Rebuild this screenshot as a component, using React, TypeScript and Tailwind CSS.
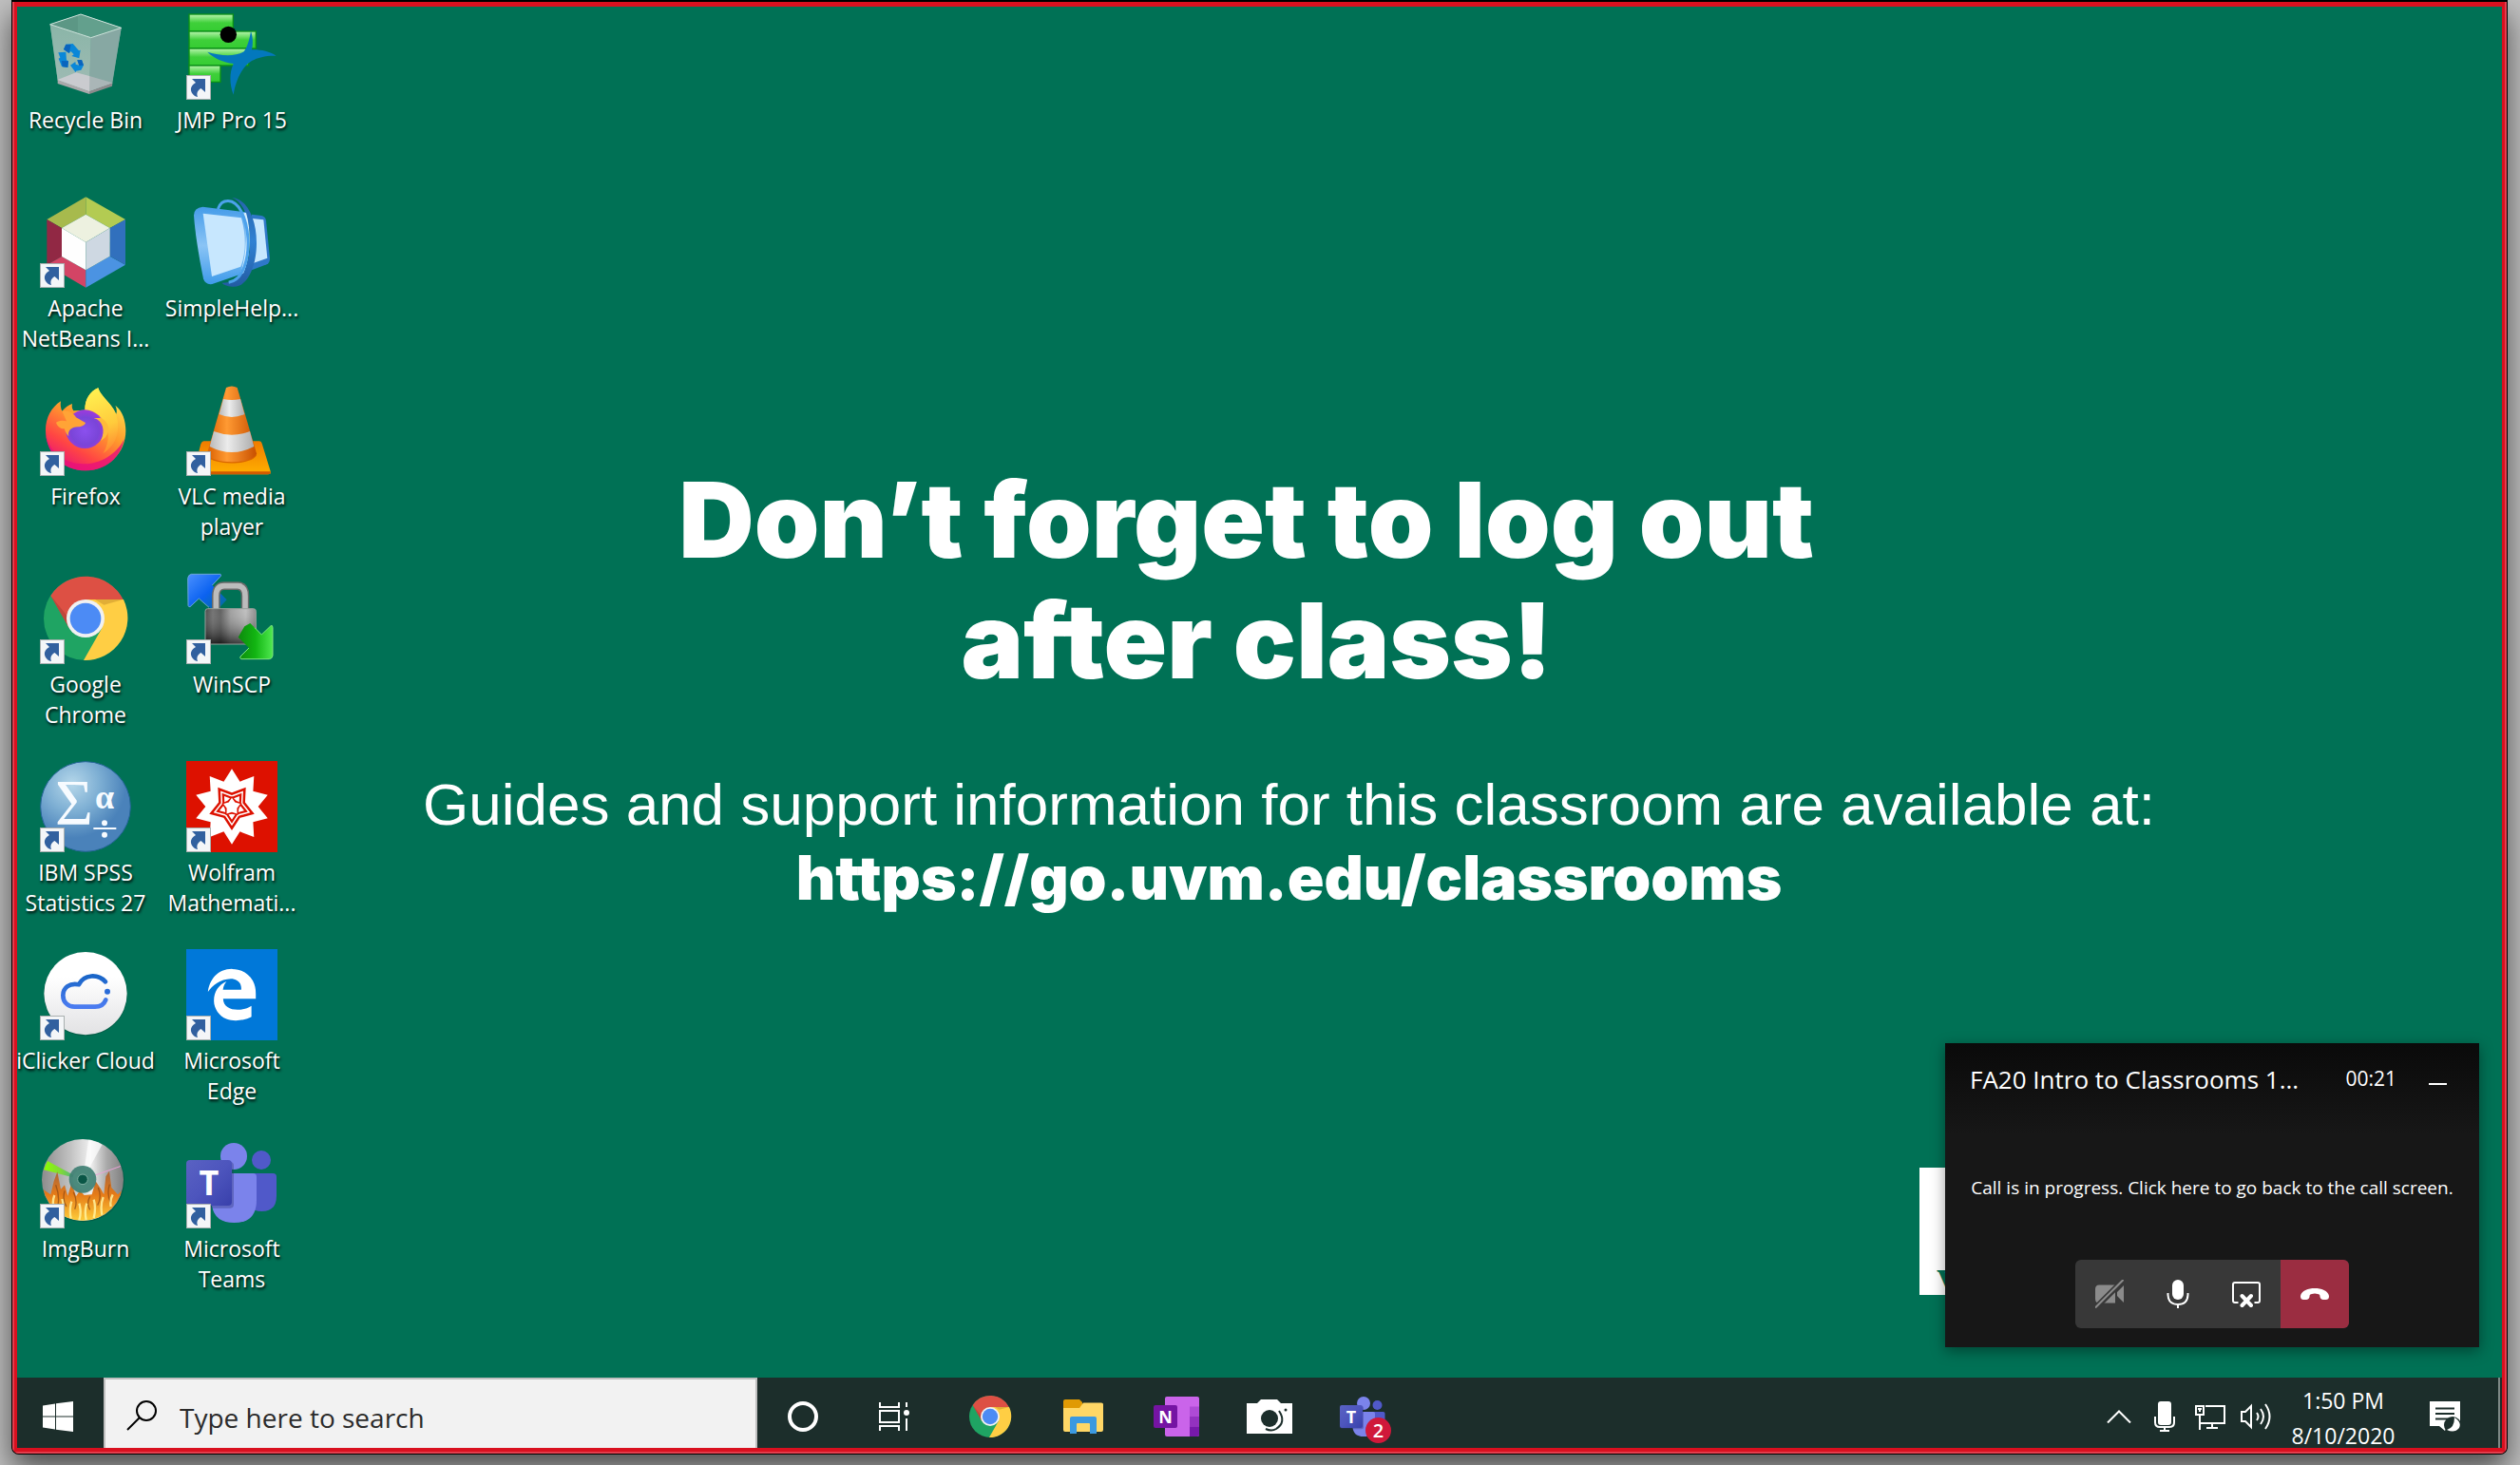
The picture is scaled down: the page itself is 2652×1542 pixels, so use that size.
import React from "react"
import { FaEdgeLegacy } from "react-icons/fa6"

// --- HELPERS ---
function starPoints(cx: number, cy: number, outer: number, inner: number, tips: number, turn = 0) {
  const points: string[] = []
  for (let i = 0; i < tips * 2; i++) {
    const r = i % 2 === 0 ? outer : inner
    const a = (Math.PI / tips) * i + turn
    points.push(`${(cx + r * Math.sin(a)).toFixed(1)},${(cy - r * Math.cos(a)).toFixed(1)}`)
  }
  return points.join(" ")
}

// --- DESKTOP ICONS ---
function RecycleBinIcon() {
  return (
    <svg viewBox="126 27 288 288" className="size-full">
      <defs>
        <linearGradient id="binLeft" x1="0" y1="0" x2="0" y2="1">
          <stop offset="0" stopColor="#8fb8ab" />
          <stop offset="1" stopColor="#a9bfba" />
        </linearGradient>
      </defs>
      <polygon points="158,77 255,45 383,88 354,262 282,288 182,255" fill="#6fa595" />
      <polygon points="182,252 240,229 356,262 282,288" fill="#cbc9cf" />
      <polygon points="182,252 282,288 282,297 182,264" fill="#aaa8aa" />
      <polygon points="282,288 355,262 354,272 282,297" fill="#8d8b8d" />
      <polygon points="158,77 287,119 282,288 182,252" fill="url(#binLeft)" opacity=".85" />
      <polygon points="287,119 383,88 355,262 282,288" fill="#8aa8a4" opacity=".9" />
      <polygon points="182,252 240,229 282,240 282,288" fill="#cfcdd2" opacity=".85" />
      <polygon points="282,240 356,262 282,288" fill="#bdbcc2" opacity=".6" />
      <polygon points="158,77 255,45 383,88 287,119" fill="#5c9785" />
      <polygon points="246,48 255,45 383,88 287,119 246,106" fill="#63a08d" />
      <polygon points="158,77 255,45 383,88 287,119" fill="none" stroke="#cfe3dc" strokeWidth="3" />
      <polygon points="208,140 230,138 249,160 254,158 250,184 226,177 233,172 224,162 218,168 201,156" fill="#0a87d8" />
      <polygon points="208,140 224,141 218,168 201,156" fill="#0a64bd" />
      <polygon points="184,166 208,164 210,190 216,193 214,213 195,210 185,185 190,182" fill="#0a87d8" />
      <polygon points="194,192 216,193 214,213 197,211" fill="#0a64bd" />
      <polygon points="222,206 238,195 239,203 250,206 244,190 258,189 264,206 256,221 240,224 239,229" fill="#0a87d8" />
      <polygon points="244,190 258,189 264,206 250,207" fill="#0a64bd" />
    </svg>
  )
}

function JmpIcon() {
  return (
    <svg viewBox="588 27 288 288" className="size-full">
      <defs>
        <linearGradient id="jmpBar" x1="0" y1="0" x2="0" y2="1">
          <stop offset="0" stopColor="#b9f5ae" />
          <stop offset=".5" stopColor="#3fd03a" />
          <stop offset="1" stopColor="#35cc32" />
        </linearGradient>
      </defs>
      <g fill="url(#jmpBar)" stroke="#0b8f17" strokeWidth="4">
        <rect x="597" y="45" width="139" height="54" />
        <rect x="597" y="99" width="211" height="54" />
        <rect x="597" y="153" width="188" height="54" />
        <rect x="597" y="207" width="99" height="52" />
      </g>
      <circle cx="721" cy="109" r="26" />
      <path d="M655 164 C700 178 745 178 770 163 C780 150 788 125 792 98 C799 118 799 140 795 157 C822 156 850 162 872 176 C840 175 815 181 795 192 C765 210 745 250 737 299 C724 265 724 230 737 201 C705 197 675 184 655 164Z" fill="#0378bd" />
    </svg>
  )
}

function NetBeansIcon() {
  return (
    <svg viewBox="126 621 288 288" className="size-full">
      <polygon points="271,622 396,693 347,720 271,677" fill="#b3cb52" />
      <polygon points="271,622 148,693 195,720 271,677" fill="#a7ba4d" />
      <polygon points="148,693 195,720 195,810 148,836" fill="#912844" />
      <polygon points="148,836 195,810 271,853 271,908" fill="#d34465" />
      <polygon points="271,908 271,853 347,809 396,836" fill="#4b93e2" />
      <polygon points="396,693 347,720 347,809 396,836" fill="#3170bd" />
      <polygon points="271,677 347,720 271,765 195,720" fill="#edf1e0" />
      <polygon points="195,720 271,765 271,853 195,810" fill="#fefefe" />
      <polygon points="347,720 271,765 271,853 347,809" fill="#ced8e2" />
    </svg>
  )
}

function SimpleHelpIcon() {
  return (
    <svg viewBox="588 621 288 288" className="size-full">
      <defs>
        <linearGradient id="helpFrame" x1="0" y1="0" x2="0" y2="1">
          <stop offset="0" stopColor="#459ce9" />
          <stop offset=".5" stopColor="#8ac4f5" />
          <stop offset="1" stopColor="#3f9bea" />
        </linearGradient>
        <linearGradient id="helpRing" x1="0" y1="0" x2="0" y2="1">
          <stop offset="0" stopColor="#2464ac" />
          <stop offset=".5" stopColor="#3181d3" />
          <stop offset="1" stopColor="#225ba2" />
        </linearGradient>
      </defs>
      <path d="M795 677 L826 681 Q838 684 840 697 L852 815 Q852 830 842 835 L795 853Z" fill="#2e78c8" />
      <path d="M797 690 L832 694 L844 815 L797 832Z" fill="#c7e7fe" />
      <path d="M733 624 C778 628 811 690 810 770 C809 850 775 912 733 905 C715 903 707 899 700 893 C750 895 788 850 789 770 C790 690 770 640 733 624Z" fill="url(#helpRing)" />
      <path d="M640 653 L775 670 C792 720 790 820 768 863 L670 897 Q648 900 642 880 C630 820 616 740 612 680 Q612 656 640 653Z" fill="url(#helpFrame)" />
      <path d="M641 674 L762 688 C777 740 777 800 760 842 L669 873Z" fill="#c7e7fe" />
      <path d="M768 673 L777 672 C794 730 792 810 768 863 L758 866 C780 800 782 730 768 673Z" fill="#d9effe" />
      <path d="M688 660 C700 627 738 623 762 668 C786 715 790 790 772 840 C762 870 745 888 722 892" fill="none" stroke="#4ca2ec" strokeWidth="9" />
    </svg>
  )
}

function FirefoxIcon() {
  return (
    <svg viewBox="126 45 288 288" className="size-full">
      <defs>
        <linearGradient id="foxBody" x1=".85" y1="0" x2=".25" y2="1">
          <stop offset=".1" stopColor="#ffe04a" />
          <stop offset=".45" stopColor="#ff9a2c" />
          <stop offset=".75" stopColor="#ff4643" />
          <stop offset="1" stopColor="#e8107a" />
        </linearGradient>
        <linearGradient id="foxTail" x1=".4" y1="0" x2=".6" y2="1">
          <stop offset="0" stopColor="#fff150" />
          <stop offset=".6" stopColor="#ffcb3c" />
          <stop offset="1" stopColor="#ff8a30" />
        </linearGradient>
        <radialGradient id="foxGlobe" cx=".5" cy=".55" r=".6">
          <stop offset="0" stopColor="#8b50ee" />
          <stop offset=".6" stopColor="#7a45d8" />
          <stop offset="1" stopColor="#a936dd" />
        </radialGradient>
      </defs>
      <path d="M192 97 C190 110 192 120 196 128 C205 118 216 109 228 105 C226 115 228 121 232 127 L268 125 C268 90 284 66 310 55 C318 85 350 100 367 137 C370 128 368 118 364 110 C388 128 397 160 397 190 C397 262 340 316 270 316 C198 316 144 260 144 188 C144 150 162 116 192 97Z" fill="url(#foxBody)" />
      <path d="M144 196 C152 258 205 296 266 295 C330 294 378 250 392 215 C382 276 332 316 270 316 C198 316 147 262 144 196Z" fill="#e8107a" opacity=".8" />
      <path d="M268 125 C268 90 284 66 310 55 C318 85 368 110 372 165 C376 205 360 240 325 262 C350 225 345 175 322 152 C312 135 290 126 268 125Z" fill="url(#foxTail)" />
      <circle cx="268" cy="185" r="61" fill="url(#foxGlobe)" />
      <path d="M296 150 C325 158 334 190 318 222 C350 205 352 166 318 150Z" fill="#ffbb3a" />
      <path d="M196 128 C214 124 232 134 240 148 L270 165 C268 173 258 177 246 178 C225 179 213 190 217 208 C205 196 206 188 203 184 C190 184 181 176 177 164 C188 157 200 157 210 160Z" fill="#ffa436" />
    </svg>
  )
}

function VlcIcon() {
  return (
    <svg viewBox="588 45 288 288" className="size-full">
      <defs>
        <linearGradient id="vlcCone" x1="0" y1="0" x2="1" y2="0">
          <stop offset="0" stopColor="#d95f00" />
          <stop offset=".4" stopColor="#ff9a33" />
          <stop offset="1" stopColor="#c85000" />
        </linearGradient>
        <linearGradient id="vlcStripe" x1="0" y1="0" x2="1" y2="0">
          <stop offset="0" stopColor="#b9b9b9" />
          <stop offset=".4" stopColor="#ececec" />
          <stop offset="1" stopColor="#adadad" />
        </linearGradient>
        <linearGradient id="vlcBase" x1="0" y1="0" x2="0" y2="1">
          <stop offset="0" stopColor="#f07b00" />
          <stop offset="1" stopColor="#ffb000" />
        </linearGradient>
      </defs>
      <path d="M644 223 H818 Q825 223 827 230 L854 318 V325 Q852 328 846 328 H618 Q611 328 611 320 L634 232 Q637 223 644 223Z" fill="url(#vlcBase)" />
      <path d="M612 319 H854 V325 Q852 328 846 328 H618 Q611 328 612 319Z" fill="#d25a00" />
      <path d="M663 238 L655 270 C670 300 795 300 810 268 L801 238Z" fill="#d96500" />
      <path d="M714 54 Q732 45 749 54 L810 262 C800 298 664 298 654 262Z" fill="url(#vlcCone)" />
      <path d="M705 90 Q732 96 759 90 L772 138 Q732 156 692 138Z" fill="url(#vlcStripe)" />
      <path d="M675 192 Q732 214 789 192 L802 240 Q732 276 662 240Z" fill="url(#vlcStripe)" />
    </svg>
  )
}

function ChromeIcon() {
  return (
    <svg viewBox="126 639 288 288" className="size-full">
      <circle cx="270" cy="783" r="132" fill="#1fa463" />
      <path d="M390 723 A134 134 0 0 1 264 915 L322 813 L270 723Z" fill="#ffce44" />
      <path d="M160 711 A132 132 0 0 1 389 723 H270 L218 813Z" fill="#dd5044" />
      <path d="M389 723 H300 L328 740Z" fill="#c9942b" opacity=".55" />
      <path d="M160 711 L218 813 L212 775Z" fill="#a33a31" opacity=".5" />
      <circle cx="270" cy="783" r="60" fill="#f1f1f1" />
      <circle cx="270" cy="783" r="49" fill="#4c8bf5" />
    </svg>
  )
}

function WinScpIcon() {
  return (
    <svg viewBox="588 639 288 288" className="size-full">
      <defs>
        <linearGradient id="lockBody" x1="0" y1="0" x2="1" y2="0">
          <stop offset="0" stopColor="#2c2c2c" />
          <stop offset=".15" stopColor="#5a5a5a" />
          <stop offset=".3" stopColor="#444444" />
          <stop offset=".5" stopColor="#909090" />
          <stop offset=".8" stopColor="#b5b5b5" />
          <stop offset="1" stopColor="#7a7a7a" />
        </linearGradient>
        <linearGradient id="lockShade" x1="0" y1="0" x2="0" y2="1">
          <stop offset="0" stopColor="#ffffff" stopOpacity=".15" />
          <stop offset="1" stopColor="#000000" stopOpacity=".65" />
        </linearGradient>
        <linearGradient id="scpBlue" x1="0" y1="0" x2="1" y2="1">
          <stop offset="0" stopColor="#4a90ff" />
          <stop offset=".5" stopColor="#0b62f0" />
          <stop offset="1" stopColor="#04708a" />
        </linearGradient>
        <linearGradient id="scpGreen" x1="0" y1="0" x2="1" y2="0">
          <stop offset="0" stopColor="#0c8a0c" />
          <stop offset=".5" stopColor="#12b512" />
          <stop offset="1" stopColor="#4fe84f" />
        </linearGradient>
      </defs>
      <path d="M604 643 L696 643 Q699 645 697 649 L670 678 L716 724 L680 762 L628 720 L600 746 Q595 747 594 742 L593 656 Q594 645 604 643Z" fill="url(#scpBlue)" />
      <path d="M604 643 L696 643 Q699 645 697 649 L670 678 M660 748 L628 720 L600 746 Q595 747 594 742 L593 656 Q594 645 604 643" fill="none" stroke="#6aa5d8" strokeWidth="3" />
      <path d="M682 754 V712 Q682 680 708 680 H750 Q774 680 774 712 V754" fill="none" stroke="#6a6a6a" strokeWidth="26" />
      <path d="M682 754 V712 Q682 680 708 680 H750 Q774 680 774 712 V754" fill="none" stroke="#bcbcbc" strokeWidth="17" />
      <rect x="648" y="752" width="160" height="112" rx="8" fill="url(#lockBody)" />
      <rect x="648" y="752" width="160" height="112" rx="8" fill="url(#lockShade)" stroke="#98a09c" strokeWidth="3" />
      <path d="M772 808 L790 798 L826 834 L855 806 Q861 803 861 812 V900 Q860 910 850 911 H762 Q756 909 759 903 L786 876 L752 842Z" fill="url(#scpGreen)" />
      <path d="M804 812 L826 834 L855 806 Q861 803 861 812 V900 Q860 910 850 911 H762 Q756 909 759 903 L786 876" fill="none" stroke="#7de77d" strokeWidth="3" />
    </svg>
  )
}

function SpssIcon() {
  return (
    <svg viewBox="126 63 288 288" className="size-full">
      <defs>
        <radialGradient id="spssBall" cx=".35" cy=".25" r=".6">
          <stop offset="0" stopColor="#b5d7ea" />
          <stop offset=".5" stopColor="#7fb0d4" />
          <stop offset="1" stopColor="#4a82ba" />
        </radialGradient>
      </defs>
      <circle cx="270" cy="207" r="142" fill="url(#spssBall)" stroke="#256497" strokeWidth="3" />
      <g fill="#f7fbff" fontFamily="'Liberation Serif', serif">
        <text x="174" y="262" fontSize="206">Σ</text>
        <text x="300" y="212" fontSize="108" fontWeight="700">α</text>
        <rect x="295" y="273" width="72" height="6" />
        <circle cx="330" cy="259" r="9" />
        <circle cx="330" cy="296" r="9" />
      </g>
    </svg>
  )
}

function WolframIcon() {
  return (
    <svg viewBox="588 63 288 288" className="size-full">
      <rect x="588" y="63" width="288" height="288" fill="#dd1100" />
      <polygon points={starPoints(732, 207, 119, 83, 10)} fill="#ffffff" />
      <polygon points={starPoints(732, 207, 75, 44, 5, Math.PI)} fill="#dd1100" />
      <polygon points={starPoints(732, 207, 61, 36, 5, Math.PI)} fill="#ffffff" />
      <polygon points={starPoints(732, 207, 53, 31, 5, Math.PI)} fill="#dd1100" />
      <polygon points={starPoints(732, 207, 41, 24, 5, Math.PI)} fill="#ffffff" />
      <polygon points={starPoints(732, 207, 33, 23, 5)} fill="#dd1100" />
      <polygon points={starPoints(732, 207, 28, 17, 5)} fill="#ffffff" />
    </svg>
  )
}

function IClickerIcon() {
  return (
    <svg viewBox="126 657 288 288" className="size-full">
      <defs>
        <linearGradient id="clickerDisc" x1="0" y1="0" x2="0" y2="1">
          <stop offset=".3" stopColor="#ffffff" />
          <stop offset="1" stopColor="#e2e2e4" />
        </linearGradient>
        <linearGradient id="clickerCloud" x1="0" y1="0" x2="0" y2="1">
          <stop offset="0" stopColor="#1a66c8" />
          <stop offset="1" stopColor="#4a7bf0" />
        </linearGradient>
      </defs>
      <circle cx="270" cy="799" r="132" fill="#0a4a3a" opacity=".5" />
      <circle cx="270" cy="797" r="131" fill="url(#clickerDisc)" />
      <path d="M333 760 C310 735 265 735 249 769 C220 763 199 778 199 803 C199 825 215 839 235 839 H300 C318 839 329 830 334 817" fill="none" stroke="url(#clickerCloud)" strokeWidth="14" strokeLinecap="round" strokeLinejoin="round" />
      <circle cx="339" cy="791" r="9" fill="#2a6cd8" />
    </svg>
  )
}

function EdgeIcon() {
  return (
    <div className="flex size-full items-center justify-center bg-[#0078d9] text-white">
      <FaEdgeLegacy className="size-14" />
    </div>
  )
}

function ImgBurnIcon() {
  return (
    <svg viewBox="126 81 288 288" className="size-full">
      <defs>
        <linearGradient id="discShine" x1="0" y1="0" x2="1" y2="0">
          <stop offset="0" stopColor="#8c8c8c" />
          <stop offset=".35" stopColor="#c2c2c2" />
          <stop offset=".6" stopColor="#f0f0f0" />
          <stop offset=".8" stopColor="#a8a8a8" />
          <stop offset="1" stopColor="#808080" />
        </linearGradient>
        <linearGradient id="discFire" x1="0" y1="0" x2="0" y2="1">
          <stop offset="0" stopColor="#a8663c" />
          <stop offset=".45" stopColor="#e57a18" />
          <stop offset="1" stopColor="#ffd23c" />
        </linearGradient>
        <linearGradient id="discRay" x1="0" y1="0" x2="1" y2="0">
          <stop offset="0" stopColor="#8cff00" />
          <stop offset=".45" stopColor="#7fd83a" />
          <stop offset="1" stopColor="#2f9db0" />
        </linearGradient>
        <clipPath id="discClip">
          <circle cx="261" cy="216" r="128" />
        </clipPath>
      </defs>
      <circle cx="263" cy="219" r="130" fill="#064a39" opacity=".5" />
      <circle cx="261" cy="216" r="129" fill="url(#discShine)" />
      <g clipPath="url(#discClip)">
        <polygon points="261,216 280,86 325,100" fill="#ffffff" opacity=".7" />
        <polygon points="261,216 150,156 138,184" fill="url(#discRay)" />
        <path d="M300 201 L382 172" stroke="#e9a3d6" strokeWidth="3" />
        <path d="M128 240 L160 262 L170 220 L181 190 L192 245 L204 232 L214 266 L226 226 L240 268 L252 250 L266 264 L290 262 L302 220 L318 244 L328 262 L334 205 L345 188 L352 240 L372 262 L394 240 V350 H128Z" fill="url(#discFire)" />
        <g fill="none" stroke="#8a4714" strokeWidth="4" opacity=".7">
          <path d="M176 232 Q190 270 182 300 M204 250 Q196 280 210 300 M232 254 Q246 284 236 308 M284 268 Q272 290 284 310 M310 240 Q322 270 308 296 M346 230 Q336 262 350 290" />
        </g>
        <g fill="none" stroke="#fff3a0" strokeWidth="7" opacity=".85">
          <path d="M196 330 Q204 300 196 276 M224 338 Q218 310 226 284 M250 344 Q258 318 250 290 M272 342 Q266 314 274 290 M296 336 Q304 304 296 278 M322 326 Q316 296 326 270 M350 300 Q346 280 356 262 M170 300 Q164 286 172 264" />
        </g>
      </g>
      <circle cx="261" cy="214" r="43" fill="#3f7f73" opacity=".92" />
      <circle cx="261" cy="214" r="32" fill="#4b8a7c" />
      <circle cx="261" cy="214" r="16" fill="#0a5646" stroke="#7fb0a2" strokeWidth="3" />
    </svg>
  )
}

function TeamsIcon({ id }: { id: string }) {
  return (
    <svg viewBox="588 81 288 288" className="size-full">
      <defs>
        <linearGradient id={id} x1="0" y1="0" x2="1" y2="1">
          <stop offset="0" stopColor="#5a62c3" />
          <stop offset=".5" stopColor="#4d55bd" />
          <stop offset="1" stopColor="#3940ab" />
        </linearGradient>
      </defs>
      <circle cx="825" cy="153" r="30" fill="#5059c9" />
      <path d="M780 195 H862 Q873 195 873 206 V266 Q873 315 826 315 Q795 315 780 290Z" fill="#5059c9" />
      <circle cx="738" cy="141" r="42" fill="#7b83eb" />
      <path d="M668 195 H799 Q810 195 810 206 V280 Q810 351 739 351 Q668 351 668 280Z" fill="#7b83eb" />
      <rect x="592" y="159" width="146" height="146" rx="12" fill="#2b3270" opacity=".35" />
      <rect x="588" y="153" width="144" height="144" rx="12" fill={`url(#${id})`} />
      <text x="660" y="264" textAnchor="middle" fontSize="108" fontWeight="700" fill="#ffffff" fontFamily="'Open Sans', sans-serif">T</text>
    </svg>
  )
}

function ShortcutArrow() {
  return (
    <svg viewBox="0 0 26 26" className="absolute bottom-0 left-0 size-[26px]">
      <rect x=".5" y=".5" width="25" height="25" fill="#f4f6f8" stroke="#a9b0b0" />
      <path d="M6 4 H20 V18 L15.500 14 C12 16 10.500 19 12 23 C6.500 22 3 16 6 11.500 C7 10 8.500 9 10 8Z" fill="#31609f" />
    </svg>
  )
}

const shortcuts = [
  { name: "Recycle Bin", icon: <RecycleBinIcon />, linked: false },
  { name: "JMP Pro 15", icon: <JmpIcon />, linked: true },
  { name: "Apache\nNetBeans I...", icon: <NetBeansIcon />, linked: true },
  { name: "SimpleHelp...", icon: <SimpleHelpIcon />, linked: false },
  { name: "Firefox", icon: <FirefoxIcon />, linked: true },
  { name: "VLC media\nplayer", icon: <VlcIcon />, linked: true },
  { name: "Google\nChrome", icon: <ChromeIcon />, linked: true },
  { name: "WinSCP", icon: <WinScpIcon />, linked: true },
  { name: "IBM SPSS\nStatistics 27", icon: <SpssIcon />, linked: true },
  { name: "Wolfram\nMathemati...", icon: <WolframIcon />, linked: true },
  { name: "iClicker Cloud", icon: <IClickerIcon />, linked: true },
  { name: "Microsoft\nEdge", icon: <EdgeIcon />, linked: true },
  { name: "ImgBurn", icon: <ImgBurnIcon />, linked: true },
  { name: "Microsoft\nTeams", icon: <TeamsIcon id="teamsDesk" />, linked: true },
]

function DesktopIcons() {
  return (
    <nav className="grid w-[298px] shrink-0 auto-rows-[198px] grid-cols-2 gap-x-2.5 pt-0.5">
      {shortcuts.map((item) => (
        <button key={item.name} className="flex flex-col items-center gap-[5px]">
          <span className="relative block size-24 shrink-0">
            {item.icon}
            {item.linked && <ShortcutArrow />}
          </span>
          <span className="text-center text-[23px] leading-8 whitespace-pre text-white [text-shadow:1px_2px_3px_#000]">
            {item.name}
          </span>
        </button>
      ))}
    </nav>
  )
}

// --- WALLPAPER MESSAGE ---
function Wallpaper() {
  return (
    <div className="flex flex-1 flex-col justify-center pr-[236px] pb-3 text-center text-white">
      <h1 className="pr-[68px] font-[Inter,sans-serif] text-[110px] leading-[127px] font-black whitespace-pre">
        {"Don’t forget to log out \nafter class!"}
      </h1>
      <p className="pt-[70px] font-['Liberation_Sans',sans-serif] text-[62px] leading-[77px] whitespace-nowrap">
        Guides and support information for this classroom are available at:
      </p>
      <a href="https://go.uvm.edu/classrooms" className="font-[Inter,sans-serif] text-[64px] leading-[77px] font-black">
        https://go.uvm.edu/classrooms
      </a>
    </div>
  )
}

// --- CALL POPUP ---
function CallWindow() {
  return (
    <section className="absolute right-6 bottom-8 flex h-80 w-[562px] flex-col items-center bg-linear-to-b from-[#0a0a0a] to-[#171717] to-30% px-[26px] pb-5 text-white shadow-[0_4px_14px_rgba(0,0,0,0.4)]">
      <header className="flex h-[76px] w-full items-center">
        <h2 className="flex-1 text-[26px] whitespace-nowrap">FA20 Intro to Classrooms 1...</h2>
        <time className="mr-[34px] text-[21px]">00:21</time>
        <button aria-label="Minimize" className="mr-2 flex h-7 w-[19px] items-center pt-2.5">
          <span className="h-0.5 w-full bg-white" />
        </button>
      </header>
      <button className="flex-1 text-[19px] whitespace-nowrap">
        Call is in progress. Click here to go back to the call screen.
      </button>
      <div className="flex h-[72px] overflow-hidden rounded-md bg-[#383838]">
        <button aria-label="Turn camera on" className="flex w-[72px] items-center justify-center">
          <svg viewBox="0 0 30 30" className="size-[30px]">
            <path d="M4 5.500 H21 V24.500 H4 Q0 24.500 0 20 V10 Q0 5.500 4 5.500Z M23 13 L30 6 V24 L23 17Z" fill="#8b8b8b" />
            <path d="M-1 31 L30 0" stroke="#383838" strokeWidth="6" />
            <path d="M0 29.500 L29.500 0" stroke="#8b8b8b" strokeWidth="2" />
          </svg>
        </button>
        <button aria-label="Mute" className="flex w-[72px] items-center justify-center">
          <svg viewBox="0 0 24 30" className="h-[30px] w-6" fill="none" stroke="#ffffff" strokeWidth="2">
            <rect x="6" y="0" width="12" height="21" rx="6" fill="#ffffff" stroke="none" />
            <path d="M1.500 14 V16 Q2 26 12 26 Q22 26 22.500 16 V14 M12 26 V30" />
          </svg>
        </button>
        <button aria-label="Stop sharing" className="flex w-[72px] items-center justify-center">
          <svg viewBox="0 0 30 28" className="h-7 w-[30px]" fill="none" stroke="#ffffff" strokeWidth="2">
            <path d="M6.500 23 H3 Q1 23 1 21 V4 Q1 2 3 2 H27 Q29 2 29 4 V21 Q29 23 27 23 H23.500" />
            <path d="M10.500 16 L20 26 M20 16 L10.500 26" strokeWidth="4" strokeLinecap="round" />
          </svg>
        </button>
        <button aria-label="Hang up" className="flex w-[72px] items-center justify-center bg-[#9b2d41]">
          <svg viewBox="0 0 30 12" className="h-3 w-[30px]">
            <path d="M0 8 C1 2.500 8 0 15 0 C22 0 29 2.500 30 8 C30 11 29 12 26 12 C22.500 12 21 11.500 20.500 9 C20.500 6.500 20 6 15 5.500 C10 6 9.500 6.500 9.500 9 C9 11.500 7.500 12 4 12 C1 12 0 11 0 8Z" fill="#ffffff" />
          </svg>
        </button>
      </div>
    </section>
  )
}

// --- TASKBAR ---
const pinned = [
  { name: "Google Chrome", icon: <span className="block size-12"><ChromeIcon /></span> },
  {
    name: "File Explorer",
    icon: (
      <svg viewBox="0 0 44 36" className="h-9 w-11">
        <path d="M1 2 Q1 0 3 0 H18 L21 3 V9 H1Z" fill="#e09a04" />
        <path d="M1 9 H18 L22 3.500 H41 Q43 3.500 43 5 V32 Q43 34 41 34 H3 Q1 34 1 32Z" fill="#ffd766" />
        <path d="M8 36 V20 Q8 18 10 18 H34 Q36 18 36 20 V36 H29 V26 Q29 25 28 25 H16 Q15 25 15 26 V36Z" fill="#3c99e0" />
      </svg>
    ),
  },
  {
    name: "OneNote",
    icon: (
      <svg viewBox="0 0 48 42" className="h-[42px] w-12">
        <rect x="12" width="36" height="42" rx="2" fill="#ca64ea" />
        <rect x="38" y="10.500" width="10" height="10.500" fill="#ae4bd5" />
        <rect x="38" y="21" width="10" height="10.500" fill="#9332bf" />
        <path d="M38 31.500 H48 V40 Q48 42 46 42 H38Z" fill="#7719aa" />
        <rect y="9" width="25" height="24" rx="2" fill="#7514a3" />
        <text x="12.500" y="28" textAnchor="middle" fontSize="18" fontWeight="700" fill="#ffffff" fontFamily="'Open Sans', sans-serif">N</text>
      </svg>
    ),
  },
  {
    name: "Camera",
    icon: (
      <svg viewBox="0 0 48 36" className="h-9 w-12">
        <path d="M0 4 H11 L15 0 H32 L36 4 H48 V36 H0Z" fill="#ffffff" />
        <circle cx="24" cy="20" r="9" fill="#1c2e2b" />
        <path d="M34 12 Q42 24 31 31 Q26 34 20 31" fill="none" stroke="#1c2e2b" strokeWidth="2" />
        <circle cx="41" cy="11" r="1.500" fill="#1c2e2b" />
      </svg>
    ),
  },
  {
    name: "Microsoft Teams",
    icon: (
      <span className="relative block size-12">
        <TeamsIcon id="teamsBar" />
        <span className="absolute -right-1.5 -bottom-1 flex size-[27px] items-center justify-center rounded-full bg-[#d0183a] text-[20px] leading-none font-semibold">
          2
        </span>
      </span>
    ),
  },
]

function Tray() {
  return (
    <div className="ml-auto flex">
      <div className="flex items-center pt-2">
        <button aria-label="Show hidden icons" className="flex w-12 justify-center">
          <svg viewBox="0 0 26 14" className="h-3.5 w-[26px]" fill="none" stroke="#ffffff" strokeWidth="2">
            <path d="M1 13.500 L13 1.500 L25 13.500" />
          </svg>
        </button>
        <button aria-label="Microphone" className="flex w-12 justify-center">
          <svg viewBox="0 0 22 32" className="h-8 w-[22px]" fill="none" stroke="#ffffff" strokeWidth="2">
            <rect x="4" y="0" width="14" height="25" rx="3" fill="#ffffff" stroke="none" />
            <path d="M1 16 V22 Q1 27 6 27 H16 Q21 27 21 22 V16 M11 27 V31 M6 31 H16" />
          </svg>
        </button>
        <button aria-label="Network" className="flex w-12 justify-center">
          <svg viewBox="0 0 32 28" className="h-7 w-8" fill="none" stroke="#ffffff" strokeWidth="2">
            <path d="M11 3 H31 V21 H5 M1 3 H9 V12 H1Z M5 12 V28 M3 6 H7 M5 6 V9 M18 21 V26 M12 26 H24" />
          </svg>
        </button>
        <button aria-label="Volume" className="flex w-12 justify-center">
          <svg viewBox="0 0 32 28" className="h-7 w-8" fill="none" stroke="#ffffff" strokeWidth="2">
            <path d="M1 9 H5 L11 3 V25 L5 19 H1Z M17 10 Q20 14 17 18 M21 6 Q27 14 21 22 M26 1 Q35 14 26 27" />
          </svg>
        </button>
        <button className="w-[136px] pt-1 text-center text-[23px] leading-[37px]">
          <span className="block">1:50 PM</span>
          <span className="block">8/10/2020</span>
        </button>
        <button aria-label="Notifications" className="flex w-[78px] justify-center">
          <svg viewBox="0 0 32 32" className="size-8">
            <path d="M0 0 H32 V26 H18 L16 31 L10 26 H0Z" fill="#ffffff" />
            <path d="M6 7.500 H26 M6 13 H26 M6 18.500 H20" stroke="#1c2e2b" strokeWidth="2" />
            <circle cx="24" cy="25" r="9" fill="#1c2e2b" />
            <path d="M26 17 Q34 22 31 28 Q26 34 18 30 Q26 28 26 17Z" fill="#ffffff" />
          </svg>
        </button>
      </div>
      <button aria-label="Show desktop" className="ml-[17px] w-1 border-l-2 border-[#7d8785]" />
    </div>
  )
}

function Taskbar() {
  return (
    <footer className="flex h-[74px] items-stretch bg-[#1c2e2b] text-white">
      <button aria-label="Start" className="flex w-[91px] items-center pt-2 pl-[27px]">
        <svg viewBox="0 0 32 32" className="size-8" fill="#ffffff">
          <path d="M0 4.500 L13 2.500 V15.500 H0Z M14 2.300 L32 0 V15.500 H14Z M0 16.500 H13 V29.500 L0 27.500Z M14 16.500 H32 V32 L14 29.700Z" />
        </svg>
      </button>
      <label className="flex w-[688px] items-center border-x-2 border-t-2 border-[#bfbfbf] bg-[#f2f2f2] pt-1 pl-[22px]">
        <svg viewBox="0 0 32 32" className="size-8 shrink-0" fill="none" stroke="#000000" strokeWidth="2">
          <circle cx="21" cy="11" r="10" />
          <path d="M14 18 L1 31" />
        </svg>
        <input
          type="text"
          aria-label="Search"
          placeholder="Type here to search"
          className="ml-6 flex-1 pt-1 text-[28px] text-black outline-none placeholder:text-[#2b2b2b]"
        />
      </label>
      <button aria-label="Cortana" className="flex w-24 items-center justify-center pt-2">
        <span className="size-8 rounded-full border-4 border-white" />
      </button>
      <button aria-label="Task View" className="flex w-24 items-center justify-center pt-2">
        <svg viewBox="0 0 32 30" className="h-[30px] w-8" fill="none" stroke="#ffffff" strokeWidth="2">
          <path d="M1 0 V5 H21 V0 M1 9 H21 V21 H1Z M1 30 V25 H21 V30 M29 0 V5 M29 17 V30" />
          <circle cx="29" cy="11" r="3" fill="#ffffff" stroke="none" />
        </svg>
      </button>
      <div className="flex pl-1">
        {pinned.map((app) => (
          <button key={app.name} aria-label={app.name} className="flex w-[98px] items-center justify-center pt-2">
            {app.icon}
          </button>
        ))}
      </div>
      <Tray />
    </footer>
  )
}

export default function App() {
  return (
    <div className="flex min-h-screen flex-col overflow-hidden bg-[#c2c2c2] pr-[13px] pb-[11px] pl-3 font-['Open_Sans',sans-serif]">
      {/* red frame that marks the shared screen */}
      <div className="flex flex-1 flex-col overflow-hidden rounded-b-lg border border-t-2 border-black bg-black shadow-[0_16px_32px_rgba(0,0,0,0.6)]">
        <div className="flex flex-1 flex-col border-x-2 border-b-2 border-[#e23f4e] bg-[#d9101f]">
          <div className="flex flex-1 flex-col border-x-3 border-t-5 border-b-4 border-[#d9101f]">
            <main className="relative flex flex-1 overflow-hidden bg-[#007155]">
              <DesktopIcons />
              <Wallpaper />
              {/* corner of the university logo, mostly under the call window */}
              <div className="absolute right-[420px] bottom-[87px] flex h-[134px] w-[193px] items-end bg-white pl-[18px] font-['Liberation_Serif',serif] text-[38px] leading-[28px] font-bold text-[#007155]">
                V
              </div>
              <CallWindow />
            </main>
            <Taskbar />
          </div>
        </div>
      </div>
    </div>
  )
}
